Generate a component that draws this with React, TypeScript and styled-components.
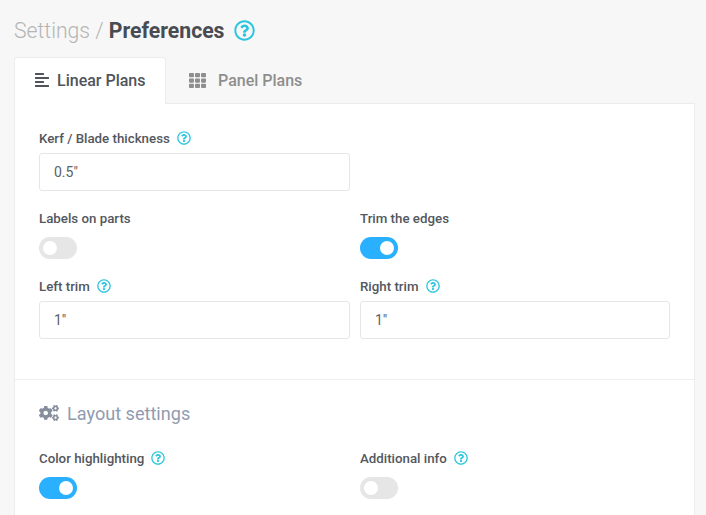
import React from "react"
import styled, { createGlobalStyle } from "styled-components"
import { FaAlignLeft, FaTh, FaCogs, FaRegQuestionCircle } from "react-icons/fa"

const GlobalStyle = createGlobalStyle`
    html, body {
        margin: 0;
        height: 100%;
        overflow: hidden;
        background: #f7f7f7;
        font-family: Roboto, "Liberation Sans", sans-serif;
    }
`

const Page = styled.div`
    padding: 15px 11px 0 14px;
`

const Title = styled.div`
    display: flex;
    align-items: center;
    height: 30px;
    font-size: 21.2px;
    color: #b4b4b4;
    font-weight: 300;
    white-space: pre;
`

const TitleStrong = styled.span`
    color: #484c52;
    font-weight: 700;
`

const TitleHelp = styled(FaRegQuestionCircle)`
    color: #2bc5de;
    font-size: 21px;
    margin-left: 9px;
`

const Tabs = styled.div`
    display: flex;
    margin-top: 12px;
    height: 46px;
`

const Tab = styled.div<{ $active?: boolean }>`
    display: flex;
    align-items: center;
    gap: ${(props) => (props.$active ? "7px" : "12px")};
    box-sizing: border-box;
    width: ${(props) => (props.$active ? "152px" : "auto")};
    padding-left: ${(props) => (props.$active ? "19px" : "23px")};
    padding-bottom: ${(props) => (props.$active ? "2px" : "0")};
    font-size: 16px;
    font-weight: 500;
    color: ${(props) => (props.$active ? "#4f545c" : "#8e8e8e")};
    background: ${(props) => (props.$active ? "#fff" : "transparent")};
    border: ${(props) => (props.$active ? "1px solid #ececec" : "none")};
    border-bottom: none;
    border-radius: 3px 3px 0 0;
    margin-bottom: ${(props) => (props.$active ? "-1px" : "0")};
    position: relative;
    z-index: 1;
`

const Panel = styled.div`
    background: #fff;
    border: 1px solid #ececec;
    height: 500px;
`

const Section = styled.div<{ $bordered?: boolean }>`
    padding: ${(props) => (props.$bordered ? "21px 24px 0" : "23px 24px 40px")};
    border-top: ${(props) => (props.$bordered ? "1px solid #efefef" : "none")};
`

const Grid = styled.div`
    display: grid;
    grid-template-columns: 311px 310px;
    column-gap: 10px;
`

const Field = styled.div`
    min-width: 0;
`

const Label = styled.div`
    display: flex;
    align-items: center;
    height: 22px;
    font-size: 13.3px;
    font-weight: 500;
    color: #53575e;
`

const LabelHelp = styled(FaRegQuestionCircle)`
    color: #2bc5de;
    font-size: 14px;
    margin-left: 7px;
`

const Input = styled.div`
    box-sizing: border-box;
    display: flex;
    align-items: center;
    height: 38px;
    margin-top: 4px;
    padding-left: 14px;
    font-size: 14px;
    color: #5c5f66;
    border: 1px solid #e6e6e6;
    border-radius: 3px;
    background: #fff;
`

const Toggle = styled.div<{ $on?: boolean }>`
    display: flex;
    align-items: center;
    justify-content: ${(props) => (props.$on ? "flex-end" : "flex-start")};
    box-sizing: border-box;
    width: 38px;
    height: 22px;
    margin-top: 8px;
    padding: 0 4px;
    border-radius: 11px;
    background: ${(props) => (props.$on ? "#29b0ff" : "#e6e6e6")};

    &::after {
        content: "";
        width: 14px;
        height: 14px;
        border-radius: 50%;
        background: #fff;
    }
`

const SectionTitle = styled.div`
    display: flex;
    align-items: center;
    gap: 8px;
    height: 24px;
    font-size: 18.1px;
    color: #8f9bb0;
    margin-bottom: 22px;
`

const CogsIcon = styled(FaCogs)`
    color: #868d9b;
    font-size: 20px;
`

const Row = styled(Grid)`
    margin-top: 16px;
`

const App: React.FC = () => {
    return (
        <Page>
            <GlobalStyle />
            <Title>
                Settings / <TitleStrong>Preferences</TitleStrong>
                <TitleHelp />
            </Title>
            <Tabs>
                <Tab $active>
                    <FaAlignLeft size={16} />
                    Linear Plans
                </Tab>
                <Tab>
                    <FaTh size={17} />
                    Panel Plans
                </Tab>
            </Tabs>
            <Panel>
                <Section>
                    <Grid>
                        <Field>
                            <Label>
                                Kerf / Blade thickness
                                <LabelHelp />
                            </Label>
                            <Input>0.5"</Input>
                        </Field>
                    </Grid>
                    <Row>
                        <Field>
                            <Label>Labels on parts</Label>
                            <Toggle />
                        </Field>
                        <Field>
                            <Label>Trim the edges</Label>
                            <Toggle $on />
                        </Field>
                    </Row>
                    <Row>
                        <Field>
                            <Label>
                                Left trim
                                <LabelHelp />
                            </Label>
                            <Input>1"</Input>
                        </Field>
                        <Field>
                            <Label>
                                Right trim
                                <LabelHelp />
                            </Label>
                            <Input>1"</Input>
                        </Field>
                    </Row>
                </Section>
                <Section $bordered>
                    <SectionTitle>
                        <CogsIcon />
                        Layout settings
                    </SectionTitle>
                    <Grid>
                        <Field>
                            <Label>
                                Color highlighting
                                <LabelHelp />
                            </Label>
                            <Toggle $on />
                        </Field>
                        <Field>
                            <Label>
                                Additional info
                                <LabelHelp />
                            </Label>
                            <Toggle />
                        </Field>
                    </Grid>
                </Section>
            </Panel>
        </Page>
    )
}

export default App
